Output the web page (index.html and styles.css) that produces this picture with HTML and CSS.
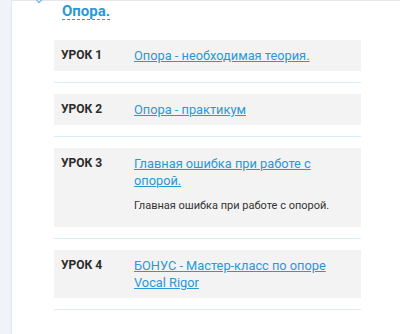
FILE: index.html
```html
<!DOCTYPE html>
<html lang="ru">

<head>
    <meta charset="UTF-8">
    <meta name="viewport" content="width=device-width, initial-scale=1.0">
    <title>Опора</title>
    <link rel="stylesheet" href="styles.css">
</head>

<body>
    <div class="layout">
        <div class="sidebar"></div>
        <div class="content">
            <div class="module">
                <span class="chevron"></span>
                <h2 class="module-title">Опора.</h2>
            </div>

            <div class="lessons">
                <div class="lesson">
                    <div class="lesson-box">
                        <div class="lesson-num">УРОК 1</div>
                        <div class="lesson-body">
                            <a href="#">Опора - необходимая теория.</a>
                        </div>
                    </div>
                </div>
                <div class="lesson">
                    <div class="lesson-box">
                        <div class="lesson-num">УРОК 2</div>
                        <div class="lesson-body">
                            <a href="#">Опора - практикум</a>
                        </div>
                    </div>
                </div>
                <div class="lesson">
                    <div class="lesson-box">
                        <div class="lesson-num">УРОК 3</div>
                        <div class="lesson-body">
                            <a href="#">Главная ошибка при работе с опорой.</a>
                            <p class="lesson-desc">Главная ошибка при работе с опорой.</p>
                        </div>
                    </div>
                </div>
                <div class="lesson">
                    <div class="lesson-box">
                        <div class="lesson-num">УРОК 4</div>
                        <div class="lesson-body">
                            <a href="#">БОНУС - Мастер-класс по опоре Vocal Rigor</a>
                        </div>
                    </div>
                </div>
            </div>
        </div>
    </div>
</body>

</html>
```
FILE: styles.css
```css
body {
    margin: 0;
    font-family: Roboto, "Noto Sans", Arial, sans-serif;
    background-color: #fff;
    color: #333;
}

.layout {
    display: flex;
    min-height: 334px;
}

.sidebar {
    width: 11px;
    background-color: #f0f4f8;
    border-right: 1px solid #dde8f0;
}

.content {
    flex: 1;
    border-top: 1px solid #e4e6ea;
}

.module {
    position: relative;
    padding-left: 50px;
    height: 39px;
}

.chevron {
    position: absolute;
    left: 24px;
    top: -5px;
    width: 5px;
    height: 5px;
    border-right: 1.5px solid #6aaee0;
    border-bottom: 1.5px solid #6aaee0;
    transform: rotate(45deg);
}

.module-title {
    display: inline-block;
    margin: 0;
    margin-top: -2px;
    font-size: 15px;
    font-weight: 700;
    line-height: 15px;
    color: #2b98d6;
    border-bottom: 1px dashed #2b98d6;
}

.lessons {
    width: 307px;
    margin-left: 42px;
}

.lesson {
    border-bottom: 1px solid #d9eef8;
    padding-bottom: 11px;
    margin-bottom: 11px;
}

.lesson-box {
    display: flex;
    background-color: #f3f3f3;
    padding: 7px 7px;
    font-size: 12.8px;
    line-height: 17px;
}

.lesson-num {
    width: 73px;
    flex-shrink: 0;
    font-size: 12px;
    font-weight: 700;
    color: #2b2b2b;
}

.lesson-body a {
    color: #2b98d6;
    text-decoration: underline;
}

.lesson-desc {
    margin: 8px 0 6px;
    font-size: 11px;
    color: #333;
}
```
